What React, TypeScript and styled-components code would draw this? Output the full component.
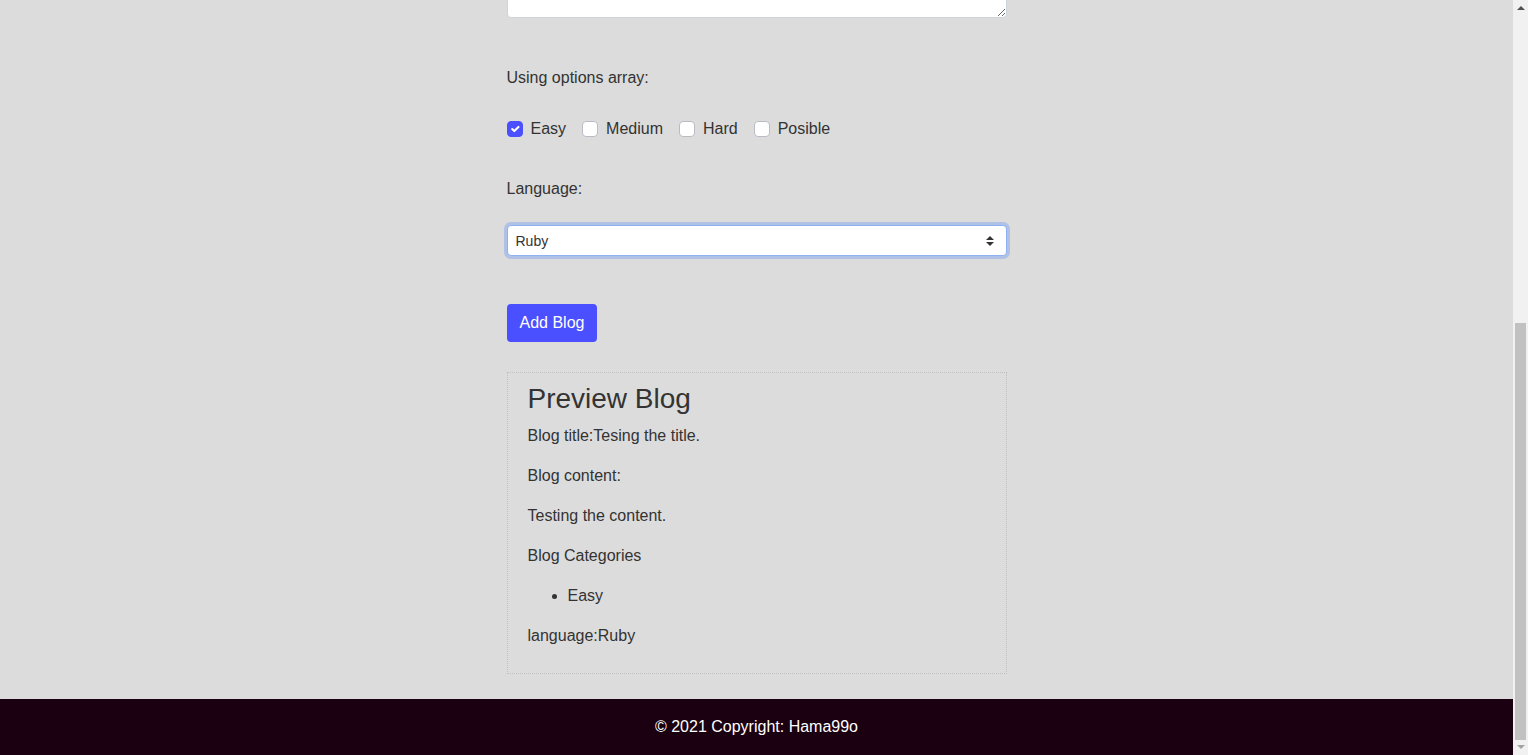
import React from "react";
import styled, { createGlobalStyle } from "styled-components";

const GlobalStyle = createGlobalStyle`
  html, body {
    margin: 0;
    padding: 0;
    background: #dcdcdc;
    font-family: "Liberation Sans", Arial, sans-serif;
    color: #333;
    font-size: 16px;
    line-height: 24px;
    overflow: hidden;
  }
  * { box-sizing: border-box; }
`;

const Window = styled.div`
  display: flex;
  height: 755px;
  width: 100%;
`;

const Viewport = styled.div`
  flex: 1;
  min-width: 0;
  height: 100%;
  overflow: hidden;
  display: flex;
  flex-direction: column;
  justify-content: flex-end;
`;

const Scrollbar = styled.div`
  width: 15px;
  height: 100%;
  background: #f1f1f1;
  display: flex;
  flex-direction: column;
  align-items: center;
`;

const ArrowBtn = styled.div`
  width: 15px;
  height: 15px;
  flex: none;
  display: flex;
  align-items: center;
  justify-content: center;
`;

const Thumb = styled.div`
  margin-top: auto;
  width: 11px;
  height: 417px;
  background: #c1c1c1;
`;

const Main = styled.main`
  width: 500px;
  margin: 0 auto;
  flex: none;
`;

const Label = styled.label<{ $mt?: number }>`
  display: block;
  margin-top: ${(p) => p.$mt ?? 0}px;
  line-height: 24px;
`;

const TextArea = styled.textarea`
  display: block;
  width: 100%;
  height: 120px;
  border: 1px solid #ced4da;
  border-radius: 4px;
  padding: 6px 12px;
  font: inherit;
  background: #fff;
  resize: both;
`;

const CheckRow = styled.div`
  display: flex;
  align-items: center;
  gap: 16px;
  margin-top: 27px;
  height: 24px;
`;

const CheckItem = styled.label`
  display: flex;
  align-items: center;
  gap: 8px;
  line-height: 24px;
`;

const Check = styled.input.attrs({ type: "checkbox" })`
  appearance: none;
  -webkit-appearance: none;
  margin: 0;
  width: 16px;
  height: 16px;
  border: 1px solid #b9bcc4;
  border-radius: 4px;
  background: #fff;
  &:checked {
    background-color: #4a4fff;
    border-color: #4a4fff;
    background-image: url("data:image/svg+xml,%3csvg xmlns='http://www.w3.org/2000/svg' viewBox='0 0 20 20'%3e%3cpath fill='none' stroke='%23fff' stroke-linecap='round' stroke-linejoin='round' stroke-width='3' d='M6 10l3 3l6-6'/%3e%3c/svg%3e");
    background-size: 100% 100%;
    background-repeat: no-repeat;
  }
`;

const Select = styled.select`
  display: block;
  width: 100%;
  height: 31px;
  margin-top: 24px;
  appearance: none;
  -webkit-appearance: none;
  border: 1px solid #8fb0f2;
  border-radius: 4px;
  box-shadow: 0 0 0 3px rgba(120, 160, 240, 0.45);
  background: #fff
    url("data:image/svg+xml,%3csvg xmlns='http://www.w3.org/2000/svg' viewBox='0 0 4 5'%3e%3cpath fill='%23333' d='M2 0L0 2h4zm0 5L0 3h4z'/%3e%3c/svg%3e")
    no-repeat right 12px center / 8px 10px;
  padding: 0 28px 0 8px;
  font-family: "Liberation Sans", Arial, sans-serif;
  font-size: 14px;
  color: #333;
  outline: none;
`;

const Button = styled.button`
  display: block;
  margin-top: 48px;
  height: 38px;
  padding: 6px 13px;
  border: none;
  border-radius: 4px;
  background: #4a4fff;
  color: #fff;
  font-family: "Liberation Sans", Arial, sans-serif;
  font-size: 16px;
  line-height: 24px;
  cursor: pointer;
`;

const Preview = styled.section`
  margin-top: 30px;
  border: 1px dotted #c2c2c2;
  padding: 9px 20px;
`;

const PreviewTitle = styled.h3`
  margin: 0 0 8px;
  font-size: 28px;
  line-height: 33.6px;
  font-weight: 400;
`;

const Para = styled.p`
  margin: 0 0 16px;
  line-height: 24px;
`;

const List = styled.ul`
  margin: 0 0 16px;
  padding-left: 40px;
`;

const Footer = styled.footer`
  margin-top: 25px;
  height: 56px;
  flex: none;
  background: #1a0010;
  color: #fff;
  display: flex;
  align-items: center;
  justify-content: center;
  font-size: 16px;
`;

const options = ["Easy", "Medium", "Hard", "Posible"];

export default function App() {
  return (
    <>
      <GlobalStyle />
      <Window>
        <Viewport>
          <Main>
            <TextArea aria-label="Blog content" />
            <Label $mt={48}>Using options array:</Label>
            <CheckRow>
              {options.map((o) => (
                <CheckItem key={o}>
                  <Check defaultChecked={o === "Easy"} />
                  {o}
                </CheckItem>
              ))}
            </CheckRow>
            <Label $mt={36}>Language:</Label>
            <Select defaultValue="Ruby">
              <option>JavaScript</option>
              <option>Python</option>
              <option>Ruby</option>
            </Select>
            <Button>Add Blog</Button>
            <Preview>
              <PreviewTitle>Preview Blog</PreviewTitle>
              <Para>Blog title:Tesing the title.</Para>
              <Para>Blog content:</Para>
              <Para>Testing the content.</Para>
              <Para>Blog Categories</Para>
              <List>
                <li>Easy</li>
              </List>
              <Para>language:Ruby</Para>
            </Preview>
          </Main>
          <Footer>© 2021 Copyright: Hama99o</Footer>
        </Viewport>
        <Scrollbar aria-hidden="true">
          <ArrowBtn>
            <svg width="8" height="5" viewBox="0 0 8 5">
              <path d="M0 5 L4 1 L8 5 Z" fill="#505050" />
            </svg>
          </ArrowBtn>
          <Thumb />
          <ArrowBtn>
            <svg width="8" height="5" viewBox="0 0 8 5">
              <path d="M0 0 L8 0 L4 4 Z" fill="#a3a3a3" />
            </svg>
          </ArrowBtn>
        </Scrollbar>
      </Window>
    </>
  );
}
